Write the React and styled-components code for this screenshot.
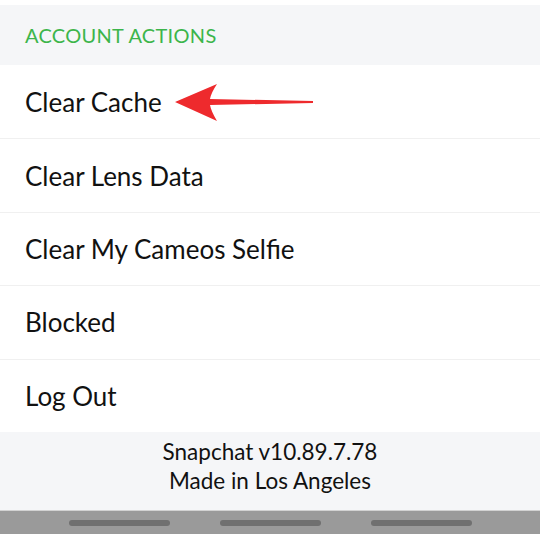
import React from "react";
import styled, { createGlobalStyle } from "styled-components";

const GlobalStyle = createGlobalStyle`
	body {
		margin: 0;
		background: #fff;
		font-family: "Lato", "Noto Sans", sans-serif;
	}
`;

const Screen = styled.div`
	width: 540px;
	height: 534px;
	display: flex;
	flex-direction: column;
	padding-top: 5px;
	box-sizing: border-box;
	overflow: hidden;
`;

const SectionHeader = styled.div`
	height: 60px;
	background: #f5f6f8;
	display: flex;
	align-items: center;
	padding-left: 25px;
	color: #3cb54b;
	font-size: 20px;
	letter-spacing: 0.3px;
`;

const Row = styled.div`
	height: 73.4px;
	box-sizing: border-box;
	display: flex;
	align-items: center;
	gap: 13px;
	padding-left: 25px;
	font-size: 26px;
	color: #111;
	border-top: ${(props) => (props.first ? "none" : "1px solid #f0f0f0")};
`;

const Footer = styled.div`
	height: 78px;
	box-sizing: border-box;
	padding-bottom: 8px;
	background: #f5f6f8;
	display: flex;
	flex-direction: column;
	align-items: center;
	justify-content: center;
	gap: 3px;
	font-size: 22.5px;
	color: #111;
	line-height: 26px;
`;

const NavBar = styled.div`
	flex: 1;
	background: #9a9a9a;
	border-top: 1px solid #d2d2d2;
	display: flex;
	justify-content: center;
	align-items: center;
	gap: 50px;
	padding-top: 2px;
`;

const Pill = styled.div`
	width: 101px;
	height: 6px;
	border-radius: 3px;
	background: #707070;
`;

const Arrow = () => (
	<svg width="140" height="40" viewBox="0 0 140 40" style={{ marginTop: "2px" }}>
		<path
			d="M0 19 L42 1 Q36 10 35 16 L138 18 L138 20 L35 22 Q36 28 42 38 Z"
			fill="#ee2a2d"
		/>
	</svg>
);

const items = ["Clear Cache", "Clear Lens Data", "Clear My Cameos Selfie", "Blocked", "Log Out"];

const App = () => {
	return (
		<Screen>
			<GlobalStyle />
			<SectionHeader>ACCOUNT ACTIONS</SectionHeader>
			{items.map((label, i) => (
				<Row key={label} first={i === 0}>
					{label}
					{i === 0 && <Arrow />}
				</Row>
			))}
			<Footer>
				<div>Snapchat v10.89.7.78</div>
				<div>Made in Los Angeles</div>
			</Footer>
			<NavBar>
				<Pill />
				<Pill />
				<Pill />
			</NavBar>
		</Screen>
	);
};

export default App;
